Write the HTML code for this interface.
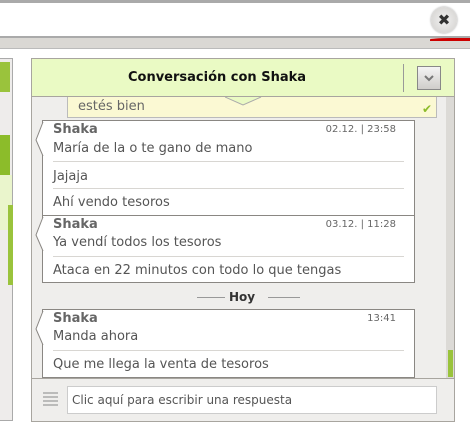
<!DOCTYPE html>
<html><head><meta charset="utf-8"><style>
*{margin:0;padding:0;box-sizing:border-box}
body{width:470px;height:436px;overflow:hidden;background:#fff;font-family:"DejaVu Sans",Verdana,sans-serif;font-size:12px;color:#555;position:relative}
.abs{position:absolute}
.b{background:#fff;border:1px solid #8a8783;position:absolute;left:42px;width:373px}
.n{position:absolute;left:10px;font-weight:bold;color:#666;font-size:13px}
.t{position:absolute;right:18px;font-size:10px;color:#666}
.m{position:absolute;left:10px;color:#555;font-size:13px}
.s{position:absolute;left:10px;right:10px;height:1px;background:#d8d6d2}
</style></head><body>
<div class="abs" style="left:0;top:0;width:470px;height:3px;background:#aaa"></div>
<div class="abs" style="left:0;top:36px;width:470px;height:13px;background:#dad8d4;border-top:2px solid #aaa;border-bottom:1px solid #bbb"></div>
<div class="abs" style="left:430px;top:38px;width:40px;height:3px;background:#c00;border-radius:50% 0 0 0"></div>
<div class="abs" style="left:431px;top:7px;width:26px;height:26px;border-radius:50%;background:radial-gradient(#f2f2f2,#d0cecb);box-shadow:0 0 2px #999;text-align:center;line-height:26px;font-size:15px;font-weight:bold;color:#333">✖</div>
<div class="abs" style="left:0;top:58px;width:13px;height:363px;background:#eeeceb;border:1px solid #aaa;border-left:none"></div>
<div class="abs" style="left:0;top:62px;width:10px;height:30px;background:#9ac33c"></div>
<div class="abs" style="left:0;top:135px;width:10px;height:40px;background:#8cbc2a"></div>
<div class="abs" style="left:0;top:175px;width:12px;height:55px;background:#eaf5cc"></div>
<div class="abs" style="left:8px;top:205px;width:5px;height:80px;background:#9ac33c"></div>
<div class="abs" style="left:31px;top:58px;width:424px;height:364px;border:1px solid #a8a59f;background:#efeeec"></div>
<div class="abs" style="left:32px;top:59px;width:422px;height:38px;background:#eafac4;border-bottom:1px solid #a8a59f"></div>
<div class="abs" style="left:32px;top:70px;width:370px;text-align:center;font-weight:bold;font-size:13px;color:#111">Conversación con Shaka</div>
<div class="abs" style="left:403px;top:64px;width:1px;height:28px;background:#999"></div>
<div class="abs" style="left:417px;top:66px;width:24px;height:24px;border:1px solid #888;background:linear-gradient(#f4f4f4,#cfcdca)"><svg width="22" height="22"><path d="M7 9 L11 13 L15 9" stroke="#777" stroke-width="2" fill="none"/></svg></div>
<div class="abs" style="left:446px;top:97px;width:8px;height:281px;background:#dcdad6"></div>
<div class="abs" style="left:448px;top:350px;width:5px;height:27px;background:#9ac33c"></div>
<div class="abs" style="left:67px;top:97px;width:370px;height:21px;background:#fbf9d3;border:1px solid #bbb;border-top:none"></div>
<div class="abs" style="left:78px;top:99px;color:#666;font-size:13px">estés bien</div>
<svg class="abs" style="left:225px;top:97px" width="40" height="10"><path d="M0 0 L18 8 L36 0" stroke="#aaa" fill="#eafac4"/></svg>
<div class="abs" style="left:422px;top:102px;color:#8cbc2a;font-size:12px">✔</div>
<div class="b" style="top:120px;height:96px">
<div class="n" style="top:1px">Shaka</div><div class="t" style="top:3px">02.12. | 23:58</div>
<div class="m" style="top:20px">María de la o te gano de mano</div>
<div class="s" style="top:40px"></div>
<div class="m" style="top:48px">Jajaja</div>
<div class="s" style="top:67px"></div>
<div class="m" style="top:74px">Ahí vendo tesoros</div>
</div>
<div class="b" style="top:215px;height:68px">
<div class="n" style="top:1px">Shaka</div><div class="t" style="top:3px">03.12. | 11:28</div>
<div class="m" style="top:19px">Ya vendí todos los tesoros</div>
<div class="s" style="top:40px"></div>
<div class="m" style="top:47px">Ataca en 22 minutos con todo lo que tengas</div>
</div>
<div class="abs" style="left:197px;top:297px;width:28px;height:1px;background:#999"></div>
<div class="abs" style="left:268px;top:297px;width:32px;height:1px;background:#999"></div>
<div class="abs" style="left:229px;top:290px;font-weight:bold;color:#333;font-size:12px">Hoy</div>
<div class="b" style="top:309px;height:69px">
<div class="n" style="top:1px">Shaka</div><div class="t" style="top:3px">13:41</div>
<div class="m" style="top:19px">Manda ahora</div>
<div class="s" style="top:40px"></div>
<div class="m" style="top:47px">Que me llega la venta de tesoros</div>
</div>
<svg class="abs" style="left:34px;top:118px" width="10" height="270">
<path d="M9 4 L2 22 L9 38" stroke="#8a8783" fill="#fff"/>
<path d="M9 99 L2 117 L9 133" stroke="#8a8783" fill="#fff"/>
<path d="M9 193 L2 211 L9 227" stroke="#8a8783" fill="#fff"/>
</svg>
<div class="abs" style="left:32px;top:378px;width:422px;height:1px;background:#a8a59f"></div>
<svg class="abs" style="left:43px;top:392px" width="16" height="16"><path d="M0 1h15M0 5h15M0 9h15M0 13h15" stroke="#aaa" stroke-width="1.5"/></svg>
<div class="abs" style="left:67px;top:386px;width:370px;height:28px;background:#fff;border:1px solid #ccc;padding:6px 4px;color:#555">Clic aquí para escribir una respuesta</div>
</body></html>
